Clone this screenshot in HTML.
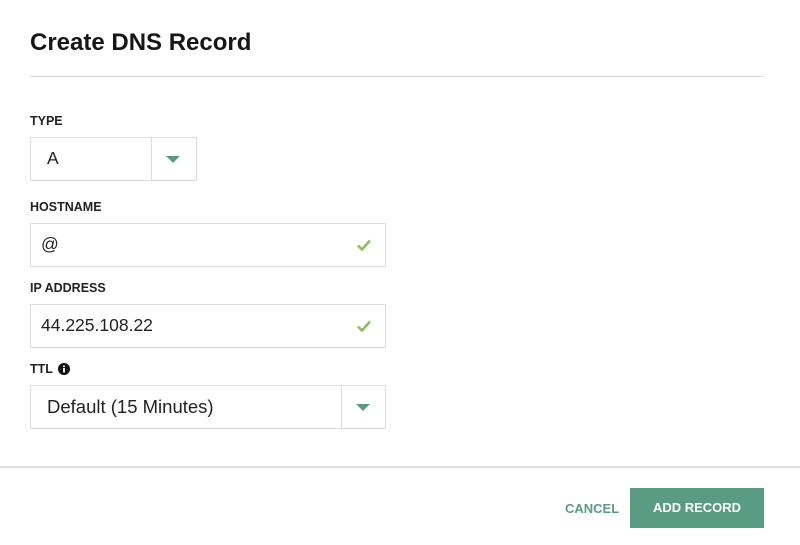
<!DOCTYPE html>
<html><head><style>
body{margin:0;width:800px;height:545px;background:#fff;font-family:"Liberation Sans",sans-serif;color:#1a1a1a;position:relative;overflow:hidden}
.a{position:absolute}
h1{position:absolute;left:30px;top:29px;margin:0;font-size:24px;font-weight:bold;color:#161616}
.hr{left:30px;width:734px;top:76px;height:1px;background:#d8d8d8}
.lbl{font-size:12.5px;font-weight:bold;color:#222;left:30px}
.box{border:1px solid #dcdcdc;box-sizing:border-box;background:#fff}
.val{font-size:17.5px;color:#222}
.tri{width:0;height:0;border-left:7px solid transparent;border-right:7px solid transparent;border-top:7px solid #5a9c83}
</style></head><body>
<h1>Create DNS Record</h1>
<div class="a hr"></div>
<div class="a lbl" style="top:114px">TYPE</div>
<div class="a box" style="left:30px;top:137px;width:167px;height:44px"></div>
<div class="a" style="left:151px;top:138px;width:1px;height:42px;background:#dcdcdc"></div>
<div class="a val" style="left:47px;top:148px">A</div>
<div class="a tri" style="left:166px;top:156px"></div>

<div class="a lbl" style="top:200px">HOSTNAME</div>
<div class="a box" style="left:30px;top:223px;width:356px;height:44px"></div>
<div class="a val" style="left:41px;top:234px">@</div>
<svg class="a" style="left:356px;top:238px" width="16" height="14" viewBox="0 0 16 14"><path d="M2 7.5L6 11.5L14 2.5" fill="none" stroke="#8cbf5a" stroke-width="2.6"/></svg>

<div class="a lbl" style="top:281px">IP ADDRESS</div>
<div class="a box" style="left:30px;top:304px;width:356px;height:44px"></div>
<div class="a val" style="left:41px;top:315px">44.225.108.22</div>
<svg class="a" style="left:356px;top:319px" width="16" height="14" viewBox="0 0 16 14"><path d="M2 7.5L6 11.5L14 2.5" fill="none" stroke="#8cbf5a" stroke-width="2.6"/></svg>

<div class="a lbl" style="top:362px">TTL</div>
<svg class="a" style="left:58px;top:363px" width="12" height="12" viewBox="0 0 12 12"><circle cx="6" cy="6" r="6" fill="#111"/><rect x="5.1" y="5" width="1.8" height="4.5" fill="#fff"/><circle cx="6" cy="3.3" r="1" fill="#fff"/></svg>
<div class="a box" style="left:30px;top:385px;width:356px;height:44px"></div>
<div class="a" style="left:341px;top:386px;width:1px;height:42px;background:#dcdcdc"></div>
<div class="a val" style="left:47px;top:396px;font-size:18.5px">Default (15 Minutes)</div>
<div class="a tri" style="left:356px;top:404px"></div>

<div class="a" style="left:0;top:466px;width:800px;height:2px;background:#e2e2e2;box-shadow:0 1px 2px rgba(0,0,0,0.06)"></div>
<div class="a" style="left:565px;top:501px;font-size:13px;font-weight:bold;color:#5a9c83">CANCEL</div>
<div class="a" style="left:630px;top:488px;width:134px;height:40px;background:#5a9c83;color:#fff;font-size:13px;font-weight:bold;text-align:center;line-height:40px">ADD RECORD</div>
</body></html>
